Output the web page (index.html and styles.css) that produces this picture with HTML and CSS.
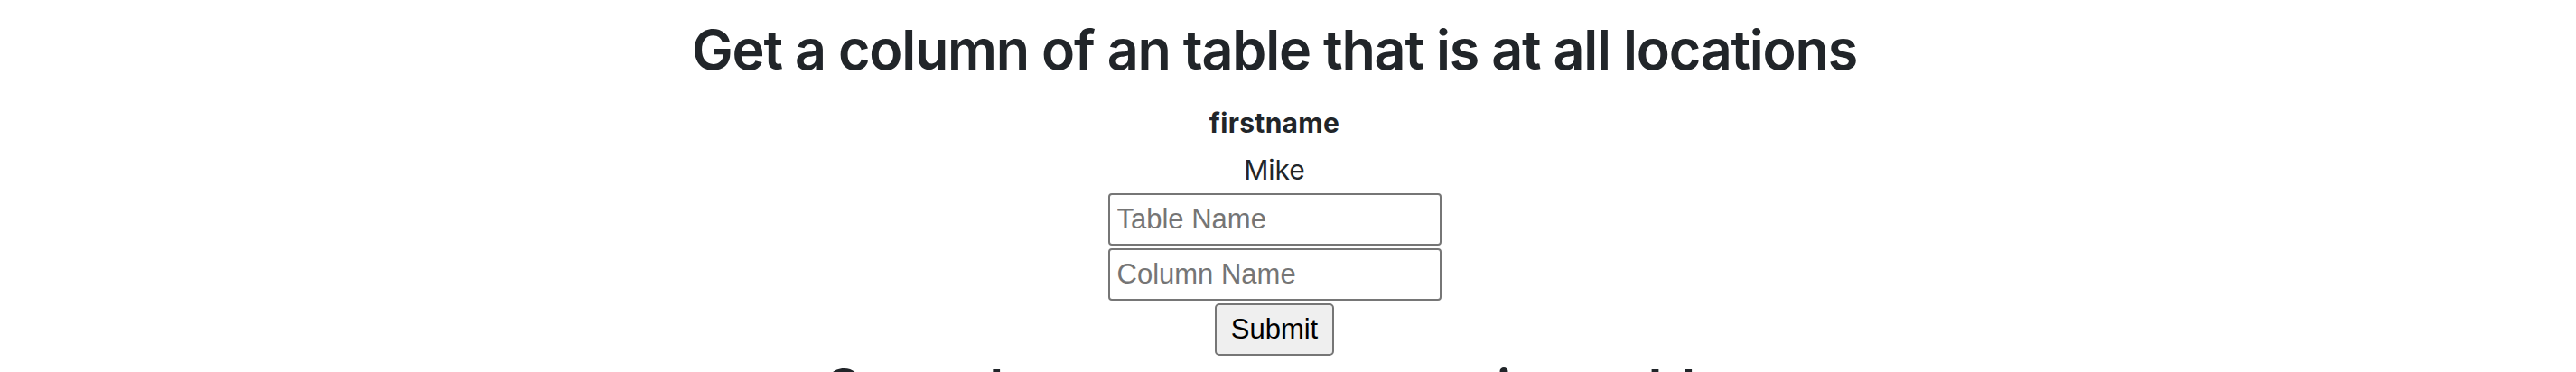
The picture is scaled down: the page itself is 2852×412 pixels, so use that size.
FILE: index.html
```html
<!DOCTYPE html>
<html lang="en">
<head>
<meta charset="utf-8">
<title>Get a column</title>
<link rel="stylesheet" href="styles.css">
</head>
<body>
<main class="page">
  <h1 class="title">Get a column of an table that is at all locations</h1>
  <table class="result">
    <thead>
      <tr><th>firstname</th></tr>
    </thead>
    <tbody>
      <tr><td>Mike</td></tr>
    </tbody>
  </table>
  <form class="query">
    <input class="field" type="text" placeholder="Table Name">
    <input class="field" type="text" placeholder="Column Name">
    <button class="submit" type="submit">Submit</button>
  </form>
  <h1 class="title">Get column count per row in a table</h1>
</main>
</body>
</html>
```

FILE: styles.css
```css
html, body {
  margin: 0;
  padding: 0;
  background: #ffffff;
}

body {
  font-family: Inter, "Liberation Sans", Arial, sans-serif;
  color: #212529;
}

.page {
  display: flex;
  flex-direction: column;
  align-items: center;
  padding: 18px 30px 0 0;
}

.title {
  margin: 0;
  font-size: 61px;
  line-height: 74px;
  font-weight: 600;
  letter-spacing: -1.2px;
  white-space: nowrap;
  text-align: center;
}

.result {
  border-collapse: collapse;
  margin-top: 18px;
  font-size: 30px;
}

.result th,
.result td {
  padding: 0;
  text-align: center;
}

.result th {
  height: 52px;
  line-height: 52px;
  font-weight: 700;
  letter-spacing: 0.3px;
}

.result td {
  height: 51px;
  line-height: 52px;
}

.query {
  display: flex;
  flex-direction: column;
  align-items: center;
  gap: 3px;
}

.field {
  box-sizing: border-box;
  width: 369px;
  height: 58px;
  margin: 0;
  padding: 0 8px;
  border: 2px solid #767676;
  border-radius: 4px;
  background: #ffffff;
  font-family: "Liberation Sans", Arial, sans-serif;
  font-size: 31px;
  color: #000000;
}

.field::placeholder {
  color: #757575;
}

.submit {
  box-sizing: border-box;
  width: 132px;
  height: 58px;
  margin: 0;
  padding: 0;
  border: 2px solid #767676;
  border-radius: 5px;
  background: #efefef;
  font-family: "Liberation Sans", Arial, sans-serif;
  font-size: 31px;
  color: #000000;
}
```
